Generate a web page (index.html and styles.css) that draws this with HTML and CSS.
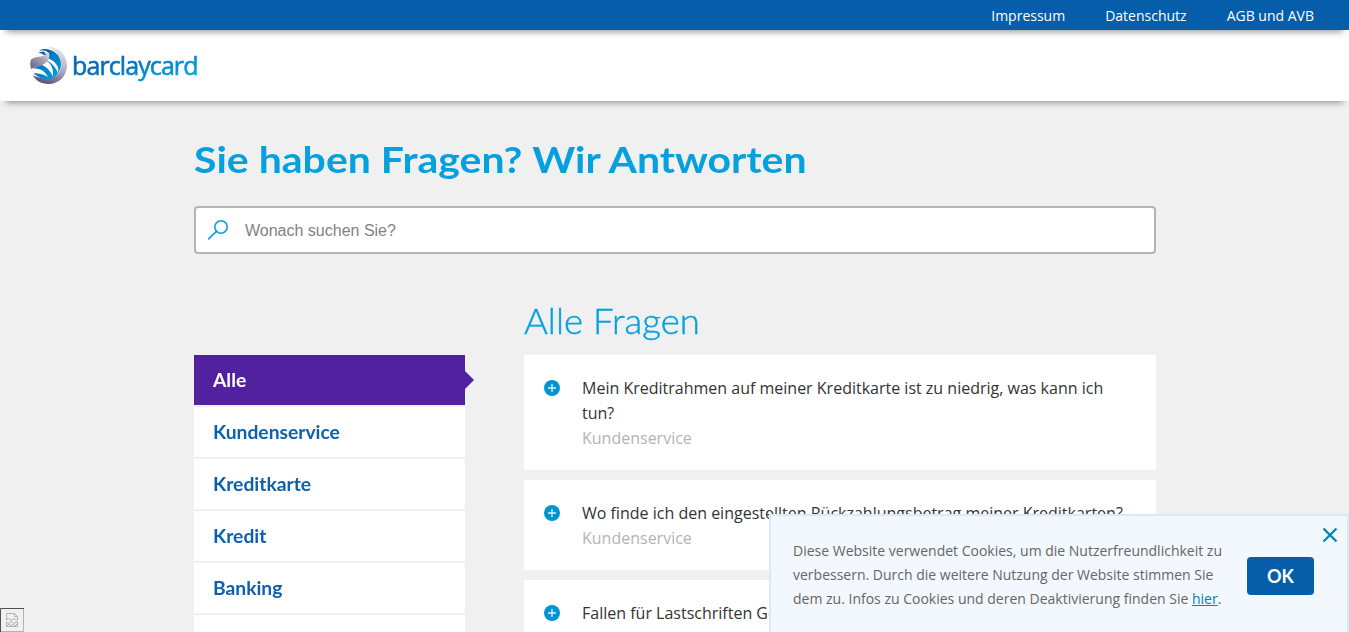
FILE: index.html
```html
<!DOCTYPE html>
<html lang="de">
<head>
<meta charset="utf-8">
<title>Barclaycard – Fragen und Antworten</title>
<link rel="stylesheet" href="styles.css">
</head>
<body>
<nav class="topbar"><a>Impressum</a><a>Datenschutz</a><a>AGB und AVB</a></nav>
<header class="header">
  <svg class="globe" viewBox="0 0 37 37" aria-hidden="true">
    <defs>
      <linearGradient id="ring" x1="0.8" y1="0" x2="0.4" y2="1"><stop offset="0" stop-color="#eceaf0"/><stop offset=".5" stop-color="#b5afc2"/><stop offset="1" stop-color="#5b5580"/></linearGradient>
      <linearGradient id="sea" x1="0" y1="0" x2="1" y2="1"><stop offset="0" stop-color="#0755a4"/><stop offset="1" stop-color="#00a7e5"/></linearGradient>
      <linearGradient id="wing" x1="0" y1="1" x2="1" y2="0"><stop offset="0" stop-color="#655f88"/><stop offset=".6" stop-color="#aaa4b8"/><stop offset="1" stop-color="#eeeef2"/></linearGradient>
    </defs>
    <path fill="url(#ring)" d="M18 0C29 0 37 8 37 18.500C37 29 29 37 18.500 37C11 37 5 33 3 28C11 33 23 33 29 26C35 17 29 5 18 0Z"/>
    <path fill="url(#sea)" d="M7 5C16 -1 27 4 30 12C33 20 29 27 23 31C15 34 7 31 2 24L4 21L14 17L16 9L8 5Z"/>
    <path fill="#fff" d="M15 13C20 15 24 21 23 29.500C21 25 17 20 12 18ZM17 11C24 13 30 19 28 26C26 21 22 16 16 13ZM1 22C8 20 15 23 18 30C13 27 8 26 3 26Z"/>
    <path fill="url(#wing)" d="M1 12.500C6 9 12 10 16 8L14 4.500L17 3.500C21 7 20 13 14 17C9 20 5 20 1 22C0 19 0 15 1 12.500Z"/>
    <path fill="#fff" d="M6 5.500C10 1 17 0 20 2L17 6L14 4.500L10 5Z"/>
    <path fill="#0756a6" d="M9 3.500C13 1.500 16 1.500 20 3L18.500 5.500L15 3.500Z"/>
  </svg>
  <span class="brand">barclaycard</span>
</header>
<main class="page">
  <h1 class="title"><span>Sie haben Fragen? Wir Antworten</span></h1>
  <div class="search">
    <svg class="search-icon" viewBox="0 0 22 22" aria-hidden="true"><circle cx="14" cy="8" r="6.2"/><path d="M9.4 12.4L1.2 20.4"/></svg>
    <span>Wonach suchen Sie?</span>
  </div>
  <div class="columns">
    <ul class="menu">
      <li class="active"><span>Alle</span></li>
      <li><span>Kundenservice</span></li>
      <li><span>Kreditkarte</span></li>
      <li><span>Kredit</span></li>
      <li><span>Banking</span></li>
      <li></li>
    </ul>
    <section class="faq">
      <h2 class="subtitle"><span>Alle Fragen</span></h2>
      <article class="item">
        <svg class="plus" viewBox="0 0 16 16" aria-hidden="true"><circle cx="8" cy="8" r="8"/><path d="M8 4v8M4 8h8"/></svg>
        <div><p>Mein Kreditrahmen auf meiner Kreditkarte ist zu niedrig, was kann ich tun?</p><p class="tag">Kundenservice</p></div>
      </article>
      <article class="item">
        <svg class="plus" viewBox="0 0 16 16" aria-hidden="true"><circle cx="8" cy="8" r="8"/><path d="M8 4v8M4 8h8"/></svg>
        <div><p>Wo finde ich den eingestellten Rückzahlungsbetrag meiner Kreditkarten?</p><p class="tag">Kundenservice</p></div>
      </article>
      <article class="item">
        <svg class="plus" viewBox="0 0 16 16" aria-hidden="true"><circle cx="8" cy="8" r="8"/><path d="M8 4v8M4 8h8"/></svg>
        <div><p>Fallen für Lastschriften Gebühren an?</p><p class="tag">Kundenservice</p></div>
      </article>
    </section>
  </div>
</main>
<aside class="cookies">
  <p>Diese Website verwendet Cookies, um die Nutzerfreundlichkeit zu verbessern. Durch die weitere Nutzung der Website stimmen Sie dem zu. Infos zu Cookies und deren Deaktivierung finden Sie <a>hier</a>.</p>
  <button class="ok">OK</button>
  <svg class="close" viewBox="0 0 16 16" aria-hidden="true"><path d="M1.500 1.500l13 13M14.500 1.500l-13 13"/></svg>
</aside>
<svg class="broken" viewBox="0 0 24 24" aria-hidden="true">
  <path fill="none" stroke="#b4b4b4" d="M23.500 1V23.500H1"/><path fill="none" stroke="#505050" d="M.5 24V.5H24"/>
  <path fill="none" stroke="#b4b4b4" d="M6.500 12V5.500h8l3 3V12M14.500 5.500v3h3M6.500 12l2-1.500 2.500 2 3-2 3 2M6.500 14l2.500 1.500 2.500-2 2.500 2 3.500-2M6.500 14v4.500h11V14M7 18l2-2 2 2 2-2 2 2 2-2"/>
</svg>
</body>
</html>
```

FILE: styles.css
```css
* { box-sizing: border-box; }
html, body { height: 632px; overflow: hidden; }
body { margin: 0; position: relative; background: #f0f0f0; font-family: "Open Sans", sans-serif; color: #333; }
p, h1, h2, ul { margin: 0; padding: 0; }
.topbar { height: 30px; background: #065da9; display: flex; justify-content: flex-end; gap: 40px; padding-right: 35px; color: #fff; font-size: 14px; line-height: 31px; box-shadow: 0 8px 6px -6px #999; position: relative; z-index: 2; }
.header { height: 71px; background: #fff; display: flex; align-items: flex-start; padding: 17px 0 0 30px; box-shadow: 0 8px 6px -6px #999; position: relative; }
.globe { width: 37px; height: 37px; flex: none; }
.brand { margin-left: 5px; font: 400 25px/37px "Open Sans", sans-serif; letter-spacing: -.9px; background: linear-gradient(165deg, #0759a8 10%, #0076c2 50%, #00aeea 90%); -webkit-background-clip: text; background-clip: text; color: transparent; -webkit-text-stroke: .6px transparent; }
.page { width: 962px; height: 531px; overflow: hidden; margin-left: 194px; }
.title span, .subtitle span, .menu span { display: inline-block; transform-origin: left; }
.title { height: 105px; padding-top: 34px; font: 700 36px/48px Lato, sans-serif; color: #06a0df; white-space: nowrap; }
.title span { transform: scaleX(1.139); }
.search { height: 48px; border: 2px solid #b4b4b4; border-radius: 4px; background: #fff; display: flex; align-items: center; padding-left: 11px; gap: 16px; font: 16px "Liberation Sans", sans-serif; color: #828282; }
.search span { padding-top: 2px; }
.search-icon { width: 22px; height: 22px; fill: none; stroke: #109fda; stroke-width: 1.6; }
.columns { display: flex; align-items: flex-start; gap: 59px; }
.menu { width: 271px; margin-top: 101px; list-style: none; display: flex; flex-direction: column; gap: 2px; }
.menu li { height: 50px; flex: none; padding-left: 19px; background: #fff; color: #0c60ae; font: 700 18px/50px Lato, sans-serif; position: relative; }
.menu span { transform: scaleX(1.07); }
.menu .active { background: #5221a0; color: #fff; }
.active::after { content: ""; position: absolute; left: 100%; top: 16px; border: 9px solid transparent; border-left-color: #5221a0; border-right: 0; }
.faq { width: 632px; }
.subtitle { height: 101px; padding-top: 42px; font: 300 35px/48px Lato, sans-serif; color: #06a0df; white-space: nowrap; -webkit-text-stroke: .4px #06a0df; }
.subtitle span { transform: scaleX(1.045); }
.item { display: flex; align-items: flex-start; gap: 22px; background: #fff; padding: 21px 30px 19px 20px; margin-bottom: 10px; font-size: 16px; line-height: 25px; }
.tag { color: #b4b4b4; }
.plus { width: 16px; height: 16px; margin-top: 4px; flex: none; fill: #0095d0; }
.plus path { stroke: #d8f3ff; stroke-width: 1.4; }
.cookies { position: absolute; left: 769px; top: 514px; width: 580px; height: 118px; background: #f2f8fd; border: 2px solid #dbebf5; border-bottom: 0; padding: 23px 0 0 22px; display: flex; align-items: flex-start; gap: 20px; color: #666; font-size: 14px; line-height: 24px; }
.cookies p { width: 434px; flex: none; }
.cookies a { color: #0080bd; text-decoration: underline; }
.ok { width: 67px; height: 38px; margin-top: 18px; border: 0; border-radius: 4px; background: #065da9; color: #fff; padding: 0 0 1px; font: 700 18px Lato, sans-serif; flex: none; }
.close { position: absolute; left: 551px; top: 11px; width: 16px; height: 16px; fill: none; stroke: #0082bb; stroke-width: 2.2; }
.broken { position: absolute; left: 0; top: 608px; width: 24px; height: 24px; }
```
